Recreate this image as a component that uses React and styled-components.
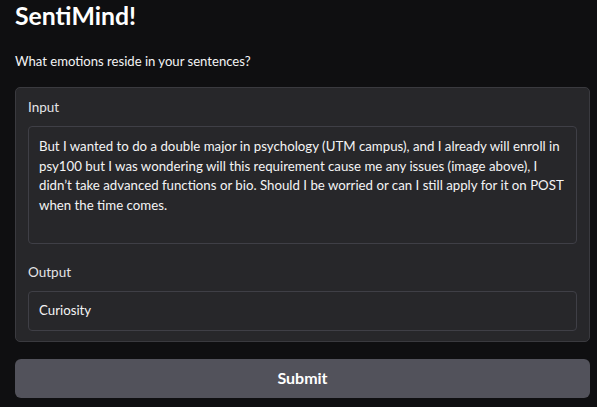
import React from "react";
import styled, { createGlobalStyle } from "styled-components";

const Global = createGlobalStyle`
  html, body { margin: 0; padding: 0; background: #0f0f11; }
  body { font-family: Lato, "Noto Sans", sans-serif; color: #f4f4f5; }
`;

const Page = styled.div`
  padding: 0 7px 0 15px;
  display: flex;
  flex-direction: column;
`;

const Title = styled.h1`
  margin: 0;
  padding-top: 1px;
  font-size: 24.8px;
  line-height: 30px;
  font-weight: 700;
  color: #ffffff;
`;

const Subtitle = styled.p`
  margin: 20px 0 0;
  font-size: 13.1px;
  line-height: 20px;
  color: #f4f4f5;
`;

const Panel = styled.div`
  margin-top: 16px;
  background: #27272a;
  border: 1px solid #3a3a3f;
  border-radius: 5px;
  padding: 8px 12px 10px 12px;
  display: flex;
  flex-direction: column;
`;

const Label = styled.div`
  font-size: 13.5px;
  line-height: 22px;
  color: #e4e4e7;
  margin-top: ${(p) => p.$top || 0}px;
`;

const Field = styled.div`
  margin-top: 8px;
  background: #27272a;
  border: 1px solid #3f3f46;
  border-radius: 4px;
  padding: ${(p) => p.$pad};
  height: ${(p) => p.$h}px;
  box-sizing: border-box;
  font-size: 13.25px;
  line-height: 19.5px;
  color: #f4f4f5;
`;

const Line = styled.div`
  white-space: nowrap;
`;

const Button = styled.button`
  margin-top: 17px;
  height: 39px;
  border: none;
  border-radius: 6px;
  background: #52525b;
  color: #ffffff;
  font-family: inherit;
  font-size: 16px;
  font-weight: 700;
  padding: 0 0 3px;
`;

const lines = [
  "But I wanted to do a double major in psychology (UTM campus), and I already will enroll in",
  "psy100 but I was wondering will this requirement cause me any issues (image above), I",
  "didn’t take advanced functions or bio. Should I be worried or can I still apply for it on POST",
  "when the time comes.",
];

export default function App() {
  return (
    <>
      <Global />
      <Page>
        <Title>SentiMind!</Title>
        <Subtitle>What emotions reside in your sentences?</Subtitle>
        <Panel>
          <Label>Input</Label>
          <Field $h={118} $pad="10px 10px">
            {lines.map((l) => (
              <Line key={l}>{l}</Line>
            ))}
          </Field>
          <Label $top={17}>Output</Label>
          <Field $h={40} $pad="9px 10px">Curiosity</Field>
        </Panel>
        <Button>Submit</Button>
      </Page>
    </>
  );
}
